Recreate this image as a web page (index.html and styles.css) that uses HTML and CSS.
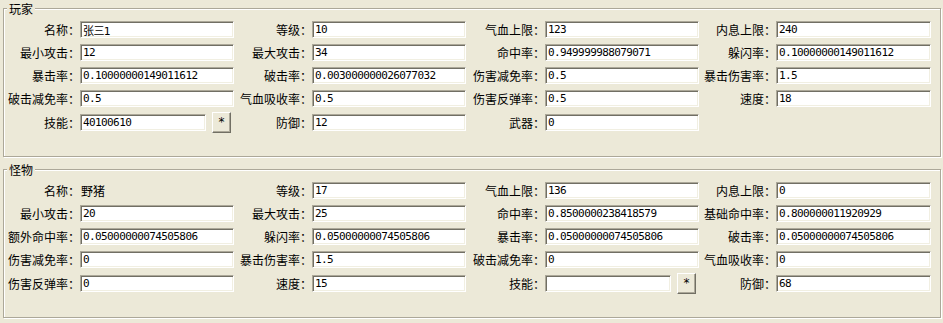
FILE: index.html
```html
<!DOCTYPE html>
<html lang="zh-CN">
<head>
<meta charset="utf-8">
<title>玩家 / 怪物</title>
<link rel="stylesheet" href="styles.css">
</head>
<body>
<fieldset class="group">
  <legend class="group-title">玩家</legend>
  <div class="fields">
    <label class="lbl">名称：</label><input class="box" value="张三1">
    <label class="lbl">等级：</label><input class="box" value="10">
    <label class="lbl">气血上限：</label><input class="box" value="123">
    <label class="lbl">内息上限：</label><input class="box" value="240">

    <label class="lbl">最小攻击：</label><input class="box" value="12">
    <label class="lbl">最大攻击：</label><input class="box" value="34">
    <label class="lbl">命中率：</label><input class="box" value="0.949999988079071">
    <label class="lbl">躲闪率：</label><input class="box" value="0.10000000149011612">

    <label class="lbl">暴击率：</label><input class="box" value="0.10000000149011612">
    <label class="lbl">破击率：</label><input class="box" value="0.003000000026077032">
    <label class="lbl">伤害减免率：</label><input class="box" value="0.5">
    <label class="lbl">暴击伤害率：</label><input class="box" value="1.5">

    <label class="lbl">破击减免率：</label><input class="box" value="0.5">
    <label class="lbl">气血吸收率：</label><input class="box" value="0.5">
    <label class="lbl">伤害反弹率：</label><input class="box" value="0.5">
    <label class="lbl">速度：</label><input class="box" value="18">

    <label class="lbl">技能：</label>
    <div class="pick"><input class="box box-short" value="40100610"><button class="btn">*</button></div>
    <label class="lbl">防御：</label><input class="box" value="12">
    <label class="lbl">武器：</label><input class="box" value="0">
    <span></span><span></span>
  </div>
</fieldset>

<fieldset class="group">
  <legend class="group-title">怪物</legend>
  <div class="fields">
    <label class="lbl">名称：</label><span class="plain">野猪</span>
    <label class="lbl">等级：</label><input class="box" value="17">
    <label class="lbl">气血上限：</label><input class="box" value="136">
    <label class="lbl">内息上限：</label><input class="box" value="0">

    <label class="lbl">最小攻击：</label><input class="box" value="20">
    <label class="lbl">最大攻击：</label><input class="box" value="25">
    <label class="lbl">命中率：</label><input class="box" value="0.8500000238418579">
    <label class="lbl">基础命中率：</label><input class="box" value="0.800000011920929">

    <label class="lbl">额外命中率：</label><input class="box" value="0.05000000074505806">
    <label class="lbl">躲闪率：</label><input class="box" value="0.05000000074505806">
    <label class="lbl">暴击率：</label><input class="box" value="0.05000000074505806">
    <label class="lbl">破击率：</label><input class="box" value="0.05000000074505806">

    <label class="lbl">伤害减免率：</label><input class="box" value="0">
    <label class="lbl">暴击伤害率：</label><input class="box" value="1.5">
    <label class="lbl">破击减免率：</label><input class="box" value="0">
    <label class="lbl">气血吸收率：</label><input class="box" value="0">

    <label class="lbl">伤害反弹率：</label><input class="box" value="0">
    <label class="lbl">速度：</label><input class="box" value="15">
    <label class="lbl">技能：</label>
    <div class="pick"><input class="box box-short" value=""><button class="btn">*</button></div>
    <label class="lbl">防御：</label><input class="box" value="68">
  </div>
</fieldset>
</body>
</html>
```

FILE: styles.css
```css
html, body {
  margin: 0;
  padding: 0;
  background: #ece9d8;
}

body {
  font-family: "Noto Sans CJK SC", "Noto Sans", sans-serif;
  font-size: 12px;
  color: #000;
  width: 943px;
  height: 323px;
  overflow: hidden;
}

.group {
  margin: 0 2px 4px 3px;
  padding: 4px 0 24px 0;
  border: 1px solid #aca899;
  box-shadow: inset 1px 1px 0 #fff, 1px 1px 0 #fff;
  min-width: 0;
}

.group-title {
  margin-left: 3px;
  padding: 0 2px;
  line-height: 17px;
  height: 17px;
  font-size: 12px;
  background: #ece9d8;
  position: relative;
}

.fields {
  display: grid;
  grid-template-columns: 76px 154px 78px 154px 79px 154px 77px 155px;
  grid-template-rows: 17px 17px 17px 17px 19px;
  row-gap: 6px;
  align-items: center;
}

.lbl {
  text-align: right;
  white-space: nowrap;
  line-height: 17px;
  height: 17px;
  letter-spacing: 0;
}

.plain {
  line-height: 17px;
  padding-left: 1px;
}

.box {
  box-sizing: border-box;
  width: 100%;
  height: 17px;
  margin: 0;
  padding: 0 2px;
  background: #fff;
  border: 1px solid;
  border-color: #aca899 #fff #fff #aca899;
  box-shadow: inset 1px 1px 0 #716f64, inset -1px -1px 0 #f1efe2;
  font-family: "DejaVu Sans Mono", "Noto Sans CJK SC", monospace;
  font-size: 11px;
  letter-spacing: -0.6px;
  color: #000;
  outline: none;
}

.pick {
  display: flex;
  align-items: center;
  gap: 6px;
  height: 19px;
}

.box-short {
  width: 126px;
  flex: none;
}

.btn {
  box-sizing: border-box;
  width: 19px;
  height: 21px;
  margin: -1px 0;
  padding: 0;
  flex: none;
  background: #ece9d8;
  border: 1px solid;
  border-color: #fff #716f64 #716f64 #fff;
  box-shadow: inset -1px -1px 0 #aca899;
  font-family: "DejaVu Sans", sans-serif;
  font-size: 12px;
  line-height: 17px;
  color: #000;
}
```
